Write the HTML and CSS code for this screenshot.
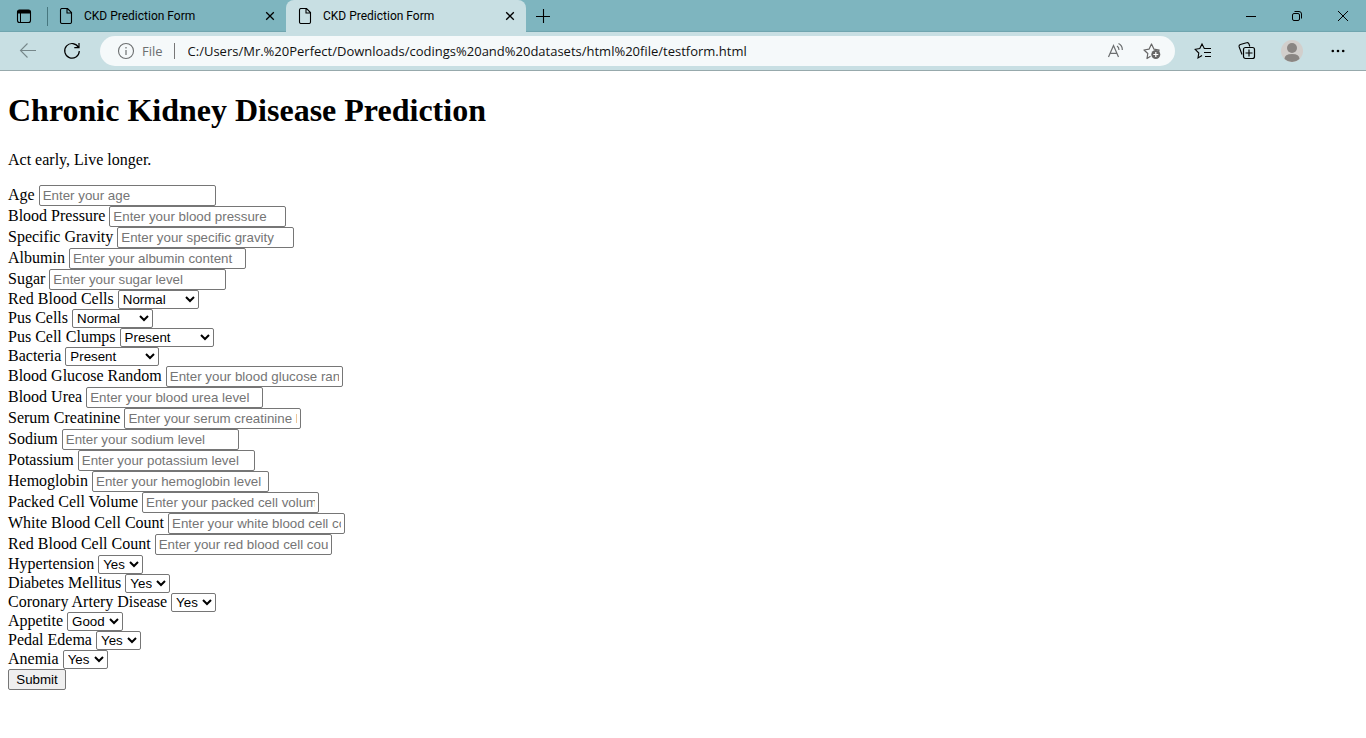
FILE: index.html
```html
<!DOCTYPE html>
<html lang="en">
<head>
<meta charset="utf-8">
<title>CKD Prediction Form</title>
<link rel="stylesheet" href="styles.css">
</head>
<body>
<header class="browser">
  <div class="tabstrip">
    <button class="tab-menu" aria-label="Tab actions">
      <svg width="16" height="16" viewBox="0 0 16 16"><rect x="1.5" y="2" width="13" height="12.500" rx="2" fill="none" stroke="#000" stroke-width="1.1"/><path d="M1.500 5.500V4a2 2 0 0 1 2-2h9a2 2 0 0 1 2 2v1.500z" fill="#000"/><path d="M4.500 5v9" stroke="#000"/></svg>
    </button>
    <div class="tab tab-first">
      <svg class="page-icon" width="16" height="16" viewBox="0 0 16 16"><path d="M4 .5h5.500L13.500 4.500V14a1.500 1.500 0 0 1-1.500 1.500H4A1.500 1.500 0 0 1 2.500 14V2A1.500 1.500 0 0 1 4 .5zM9 .5V5h4.500" fill="none" stroke="#000" stroke-width="1.1"/></svg>
      <span class="tab-title">CKD Prediction Form</span>
      <button class="tab-close" aria-label="Close tab"><svg width="10" height="10" viewBox="0 0 10 10"><path d="M1.200 1.200l7.600 7.600M8.800 1.200L1.200 8.800" stroke="#000" stroke-width="1.3"/></svg></button>
    </div>
    <div class="tab tab-active">
      <svg class="page-icon" width="16" height="16" viewBox="0 0 16 16"><path d="M4 .5h5.500L13.500 4.500V14a1.500 1.500 0 0 1-1.500 1.500H4A1.500 1.500 0 0 1 2.500 14V2A1.500 1.500 0 0 1 4 .5zM9 .5V5h4.500" fill="none" stroke="#000" stroke-width="1.1"/></svg>
      <span class="tab-title">CKD Prediction Form</span>
      <button class="tab-close" aria-label="Close tab"><svg width="10" height="10" viewBox="0 0 10 10"><path d="M1.200 1.200l7.600 7.600M8.800 1.200L1.200 8.800" stroke="#000" stroke-width="1.3"/></svg></button>
    </div>
    <button class="new-tab" aria-label="New tab"><svg width="14" height="14" viewBox="0 0 14 14"><path d="M7.500 0v14M0 7.500h14" stroke="#000" stroke-width="1.1"/></svg></button>
    <div class="window-controls">
      <button aria-label="Minimize"><svg width="12" height="12" viewBox="0 0 12 12"><path d="M1 6.500h10" stroke="#000"/></svg></button>
      <button aria-label="Restore"><svg width="12" height="12" viewBox="0 0 12 12"><rect x="1.500" y="3.500" width="7" height="7" rx="1.500" fill="none" stroke="#000"/><path d="M3.500 1.500H8A2.500 2.500 0 0 1 10.500 4v4.500" fill="none" stroke="#000"/></svg></button>
      <button aria-label="Close window"><svg width="12" height="12" viewBox="0 0 12 12"><path d="M1 1l10 10M11 1L1 11" stroke="#000"/></svg></button>
    </div>
  </div>
  <div class="toolbar">
    <button aria-label="Back"><svg width="18" height="18" viewBox="0 0 18 18"><path d="M17 8.500H1.500M8.500 1.500l-7 7 7 7" fill="none" stroke="#76878a" stroke-width="1.1"/></svg></button>
    <button aria-label="Refresh"><svg width="18" height="18" viewBox="0 0 18 18"><path d="M15.500 5.500A7.300 7.300 0 1 0 16.300 9M16 1v4.700h-4.700" fill="none" stroke="#000" stroke-width="1.2"/></svg></button>
    <div class="address">
      <svg width="18" height="18" viewBox="0 0 18 18"><circle cx="9" cy="9" r="7.500" fill="none" stroke="#6c6f70" stroke-width="1.1"/><path d="M9 8v5M9 5v1.500" stroke="#6c6f70" stroke-width="1.2"/></svg>
      <label class="scheme" for="url">File</label>
      <input class="url" id="url" type="text" value="C:/Users/Mr.%20Perfect/Downloads/codings%20and%20datasets/html%20file/testform.html">
      <button aria-label="Read aloud"><svg width="18" height="18" viewBox="0 0 18 18"><path d="M1.500 15L6.500 3.500l5 11.500M3.200 11.300h6.600M10 4q2 1.200 2 4M11.500 1.500q4 2 3.800 6.500" fill="none" stroke="#6c6f70" stroke-width="1.2"/></svg></button>
      <button aria-label="Add to favorites"><svg width="18" height="18" viewBox="0 0 18 18"><path d="M7.500 14.300L4 16.500l.8-5L1 8l5-.8L8.500 2l2.500 5.200 5.200.8-1 1" fill="none" stroke="#666" stroke-width="1.2" stroke-linejoin="round"/><circle cx="12.800" cy="12.500" r="4.500" fill="#666"/><path d="M10.300 12.500h5M12.800 10v5" stroke="#fff" stroke-width="1.2"/></svg></button>
    </div>
    <button aria-label="Favorites"><svg width="18" height="18" viewBox="0 0 18 18"><path d="M8 13.500L4 16l.8-5L1.200 7.300l4.600-.8L8 2l2.300 4.500H17M10 10.500h7M11 14.500h6" fill="none" stroke="#000" stroke-width="1.1"/></svg></button>
    <button aria-label="Collections"><svg width="18" height="18" viewBox="0 0 18 18"><path d="M4 12.500L1.200 5A2 2 0 0 1 2.400 2.500L8.500.8A2 2 0 0 1 11 2l.8 2.500" fill="none" stroke="#000" stroke-width="1.1"/><rect x="5.500" y="5.500" width="11" height="11" rx="2" fill="none" stroke="#000" stroke-width="1.2"/><path d="M11 7.500v7M7.500 11h7" stroke="#000" stroke-width="1.2"/></svg></button>
    <button class="wide" aria-label="Profile"><svg width="22" height="22" viewBox="0 0 22 22"><circle cx="11" cy="11" r="11" fill="#d2cfcc"/><circle cx="11" cy="8" r="5" fill="#8a8683"/><path d="M3.500 19q0-5 7.500-5t7.500 5a11 11 0 0 1-15 0z" fill="#8a8683"/></svg></button>
    <button class="wide" aria-label="Settings and more"><svg width="16" height="16" viewBox="0 0 16 16"><circle cx="2.800" cy="8" r="1.300"/><circle cx="8" cy="8" r="1.300"/><circle cx="13.200" cy="8" r="1.300"/></svg></button>
  </div>
</header>
<main class="page">
  <h1>Chronic Kidney Disease Prediction</h1>
  <p>Act early, Live longer.</p>
  <form>
    <div class="row"><label for="age">Age</label><input id="age" type="text" placeholder="Enter your age"></div>
    <div class="row"><label for="bp">Blood Pressure</label><input id="bp" type="text" placeholder="Enter your blood pressure"></div>
    <div class="row"><label for="sg">Specific Gravity</label><input id="sg" type="text" placeholder="Enter your specific gravity"></div>
    <div class="row"><label for="al">Albumin</label><input id="al" type="text" placeholder="Enter your albumin content"></div>
    <div class="row"><label for="su">Sugar</label><input id="su" type="text" placeholder="Enter your sugar level"></div>
    <div class="row"><label for="rbc">Red Blood Cells</label><select id="rbc"><option>Normal</option><option>Abnormal</option></select></div>
    <div class="row"><label for="pc">Pus Cells</label><select id="pc"><option>Normal</option><option>Abnormal</option></select></div>
    <div class="row"><label for="pcc">Pus Cell Clumps</label><select id="pcc"><option>Present</option><option>Not Present</option></select></div>
    <div class="row"><label for="ba">Bacteria</label><select id="ba"><option>Present</option><option>Not Present</option></select></div>
    <div class="row"><label for="bgr">Blood Glucose Random</label><input id="bgr" type="text" placeholder="Enter your blood glucose random"></div>
    <div class="row"><label for="bu">Blood Urea</label><input id="bu" type="text" placeholder="Enter your blood urea level"></div>
    <div class="row"><label for="sc">Serum Creatinine</label><input id="sc" type="text" placeholder="Enter your serum creatinine level"></div>
    <div class="row"><label for="sod">Sodium</label><input id="sod" type="text" placeholder="Enter your sodium level"></div>
    <div class="row"><label for="pot">Potassium</label><input id="pot" type="text" placeholder="Enter your potassium level"></div>
    <div class="row"><label for="hemo">Hemoglobin</label><input id="hemo" type="text" placeholder="Enter your hemoglobin level"></div>
    <div class="row"><label for="pcv">Packed Cell Volume</label><input id="pcv" type="text" placeholder="Enter your packed cell volume"></div>
    <div class="row"><label for="wc">White Blood Cell Count</label><input id="wc" type="text" placeholder="Enter your white blood cell count"></div>
    <div class="row"><label for="rc">Red Blood Cell Count</label><input id="rc" type="text" placeholder="Enter your red blood cell count"></div>
    <div class="row"><label for="htn">Hypertension</label><select id="htn"><option>Yes</option><option>No</option></select></div>
    <div class="row"><label for="dm">Diabetes Mellitus</label><select id="dm"><option>Yes</option><option>No</option></select></div>
    <div class="row"><label for="cad">Coronary Artery Disease</label><select id="cad"><option>Yes</option><option>No</option></select></div>
    <div class="row"><label for="app">Appetite</label><select id="app"><option>Good</option><option>Poor</option></select></div>
    <div class="row"><label for="pe">Pedal Edema</label><select id="pe"><option>Yes</option><option>No</option></select></div>
    <div class="row"><label for="ane">Anemia</label><select id="ane"><option>Yes</option><option>No</option></select></div>
    <button class="submit" type="submit">Submit</button>
  </form>
</main>
</body>
</html>
```

FILE: styles.css
```css
* { box-sizing: border-box; }
body { margin: 0; background: #fff; color: #000; font-family: "Liberation Serif", "Times New Roman", serif; font-size: 16px; }
.browser { font-family: "Open Sans", sans-serif; }
.browser svg { display: block; flex: none; }
.browser button { display: flex; align-items: center; justify-content: center; padding: 0; border: 0; background: none; }
.tabstrip { display: flex; height: 32px; background: #7eb5bf; box-shadow: inset 0 -2px 1px -1px #6fa3ad; }
.tab-menu { width: 47px; }
.tab { display: flex; align-items: center; width: 240px; padding: 0 11px; }
.tab-first { position: relative; width: 239px; }
.tab-first::before { content: ""; position: absolute; left: 0; top: 7px; width: 1px; height: 19px; background: #47777f; }
.tab-active { background: #c8dfe3; border-radius: 8px 8px 0 0; }
.tab-title { flex: 1; margin-left: 10px; font-family: Roboto, sans-serif; font-size: 12px; }
.new-tab { width: 34px; }
.window-controls { display: flex; margin-left: auto; }
.window-controls button { width: 46px; }
.toolbar { display: flex; align-items: center; height: 39px; padding-left: 6px; padding-right: 5px; background: #c8dfe3; border-bottom: 1px solid #97a9ac; }
.toolbar > button { width: 44px; height: 32px; }
.toolbar > .wide { width: 46px; }
.address { display: flex; flex: 1; align-items: center; height: 30px; margin: 0 6px; padding: 0 5px 0 17px; background: #f5f9fa; border-radius: 15px; }
.address button { width: 36px; height: 30px; }
.scheme { margin-left: 7px; padding-right: 11px; border-right: 1px solid #777; color: #6c6f70; font-size: 13px; line-height: 16px; }
.url { flex: 1; min-width: 0; padding: 0 0 0 13px; border: 0; background: none; color: #111; font-family: inherit; font-size: 13px; }
.page { padding: 21px 8px; }
h1 { margin: 0 0 22px; font-size: 32px; line-height: 37px; }
p { margin: 0 0 16px; line-height: 18px; }
.row { display: flex; align-items: baseline; gap: 4px; }
.row label { line-height: 18px; }
.row input { width: 177px; height: 21px; padding: 1px 3px; border: 1px solid #767676; border-radius: 2px; font-family: "Liberation Sans", Arial, sans-serif; }
.row input::placeholder { color: #757575; }
.row select { height: 19px; padding: 0 1px 0 0; border: 1px solid #767676; border-radius: 2px; background-color: #fff; color: #000; font-family: "Liberation Sans", Arial, sans-serif; }
.submit { display: block; width: 58px; height: 21px; padding: 1px 6px; border: 1px solid #767676; border-radius: 2px; background: #efefef; color: #000; font-family: "Liberation Sans", Arial, sans-serif; }
```
